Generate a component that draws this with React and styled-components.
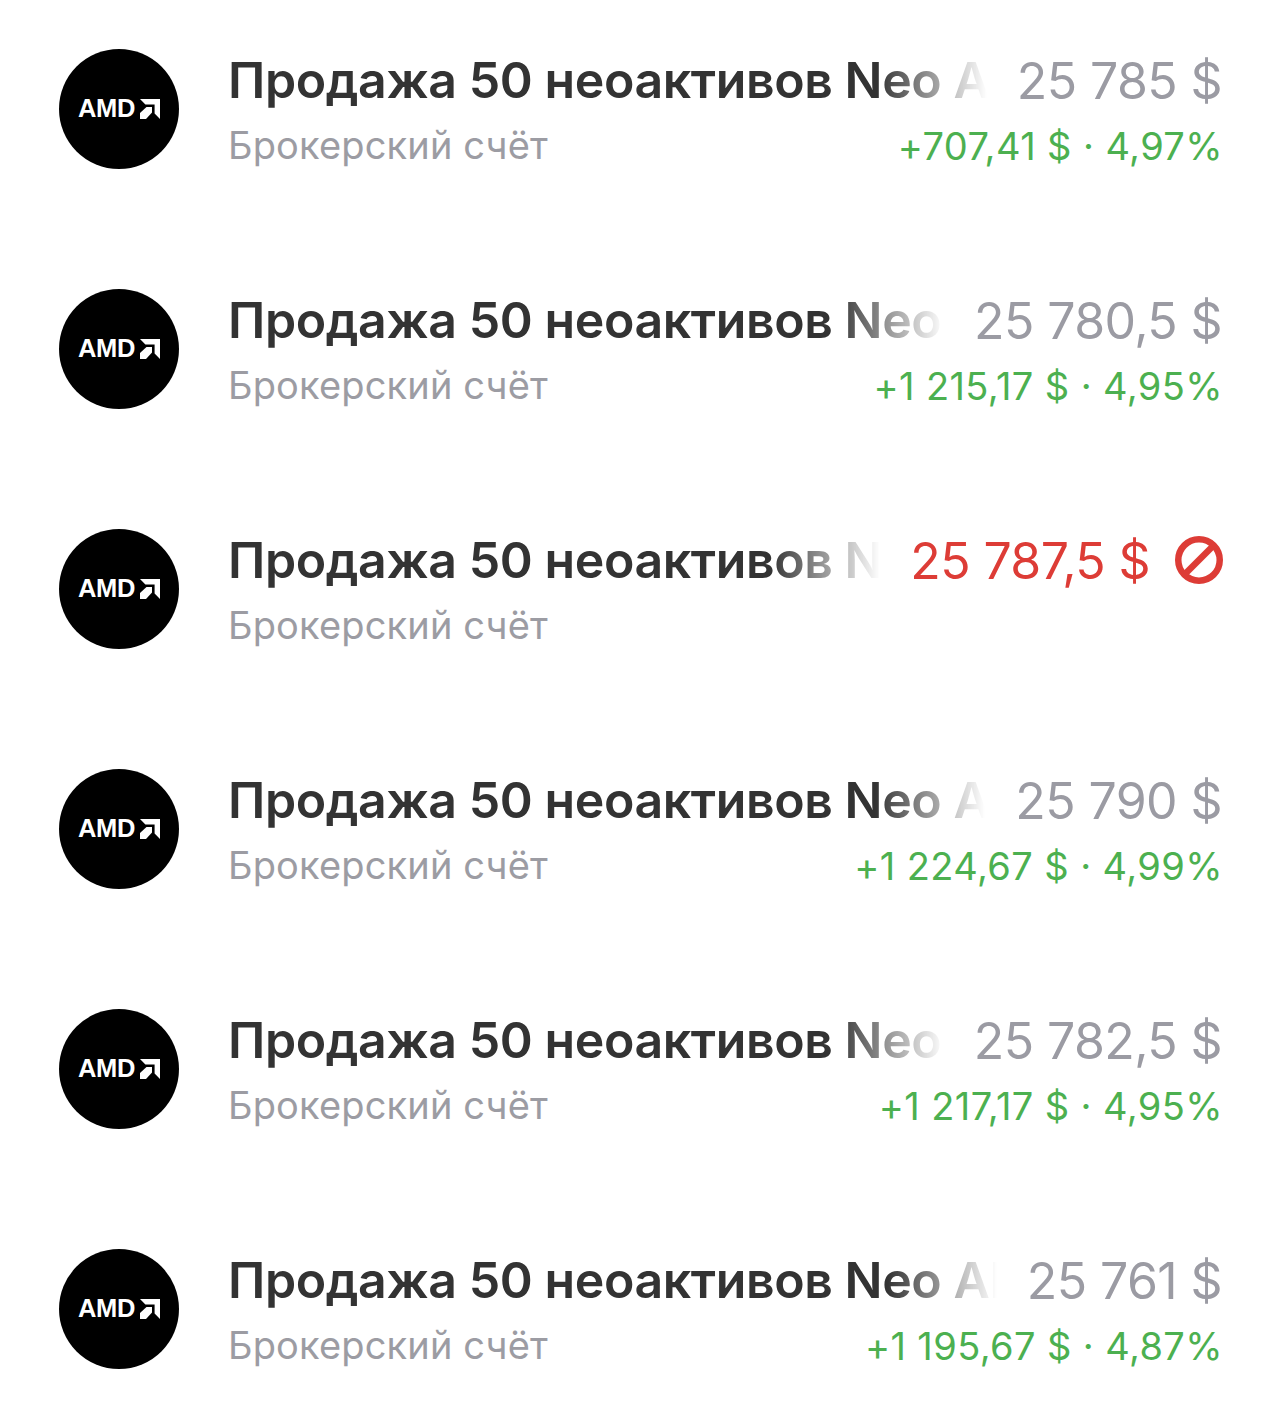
import React from 'react';
import styled, { createGlobalStyle } from 'styled-components';

const GlobalStyle = createGlobalStyle`
  html, body {
    margin: 0;
    padding: 0;
    background: #fff;
    font-family: Inter, "Noto Sans", "Liberation Sans", sans-serif;
  }
`;

const List = styled.div`
  display: flex;
  flex-direction: column;
  gap: 120px;
  padding: 49px 60px 48px 59px;
  width: 1283px;
  box-sizing: border-box;
`;

const Row = styled.div`
  display: flex;
  align-items: flex-start;
  gap: 49px;
  height: 120px;
`;

const Logo = styled.div`
  flex: none;
  display: flex;
  align-items: center;
  justify-content: center;
  gap: 5px;
  width: 120px;
  height: 120px;
  border-radius: 50%;
  background: #000;
`;

const LogoText = styled.span`
  color: #fff;
  font-family: "Liberation Sans", Arial, sans-serif;
  font-size: 25.5px;
  font-weight: 700;
  letter-spacing: -0.3px;
  line-height: 1;
`;

const Body = styled.div`
  flex: 1;
  min-width: 0;
  display: flex;
  flex-direction: column;
`;

const TopLine = styled.div`
  display: flex;
  align-items: center;
  gap: 30px;
  height: 64px;
`;

const Title = styled.div`
  flex: 1;
  min-width: 0;
  overflow: hidden;
  white-space: nowrap;
  color: #333333;
  font-size: 50px;
  font-weight: 600;
  letter-spacing: -0.4px;
  line-height: 62px;
  height: 64px;
  mask-image: linear-gradient(to left, transparent 0, #000 110px);
`;

const Amount = styled.div`
  flex: none;
  display: flex;
  align-items: center;
  gap: 25px;
  margin-right: 1px;
  color: ${(p) => (p.$declined ? '#dd3c36' : '#9b9ba3')};
  font-size: 50px;
  font-weight: 400;
  letter-spacing: -0.6px;
  line-height: 64px;
  white-space: nowrap;
`;

const BottomLine = styled.div`
  display: flex;
  align-items: center;
  justify-content: space-between;
  height: 66px;
`;

const Account = styled.span`
  color: #9c9ca3;
  font-size: 38px;
  letter-spacing: 0.15px;
  line-height: 44px;
  margin-top: -2px;
  white-space: nowrap;
`;

const Profit = styled.span`
  color: #4cb050;
  font-size: 38px;
  letter-spacing: 0.4px;
  white-space: nowrap;
`;

const DeclinedSvg = styled.svg`
  flex: none;
  margin-right: -1px;
  margin-top: -2px;
`;

const AmdArrow = () => (
  <svg width="20" height="20" viewBox="0 0 20 20" fill="#fff">
    <path d="M0 0h20v20l-5.4-5.4V5.4H5.4z" />
    <path d="M6.5 8h5.5v5.5L6 20H0v-6z" />
  </svg>
);

const DeclinedIcon = () => (
  <DeclinedSvg width="48" height="48" viewBox="0 0 48 48" fill="none" stroke="#dd3c36" strokeWidth="6.5">
    <circle cx="24" cy="24" r="20.75" />
    <path d="M10 38 38 10" />
  </DeclinedSvg>
);

const orders = [
  { amount: '25 785 $', profit: '+707,41 $ · 4,97%' },
  { amount: '25 780,5 $', profit: '+1 215,17 $ · 4,95%' },
  { amount: '25 787,5 $', declined: true },
  { amount: '25 790 $', profit: '+1 224,67 $ · 4,99%' },
  { amount: '25 782,5 $', profit: '+1 217,17 $ · 4,95%' },
  { amount: '25 761 $', profit: '+1 195,67 $ · 4,87%' },
];

export default function App() {
  return (
    <>
      <GlobalStyle />
      <List>
        {orders.map((order) => (
          <Row key={order.amount}>
            <Logo>
              <LogoText>AMD</LogoText>
              <AmdArrow />
            </Logo>
            <Body>
              <TopLine>
                <Title>Продажа 50 неоактивов Neo AI</Title>
                <Amount $declined={order.declined}>
                  {order.amount}
                  {order.declined && <DeclinedIcon />}
                </Amount>
              </TopLine>
              <BottomLine>
                <Account>Брокерский счёт</Account>
                {order.profit && <Profit>{order.profit}</Profit>}
              </BottomLine>
            </Body>
          </Row>
        ))}
      </List>
    </>
  );
}
